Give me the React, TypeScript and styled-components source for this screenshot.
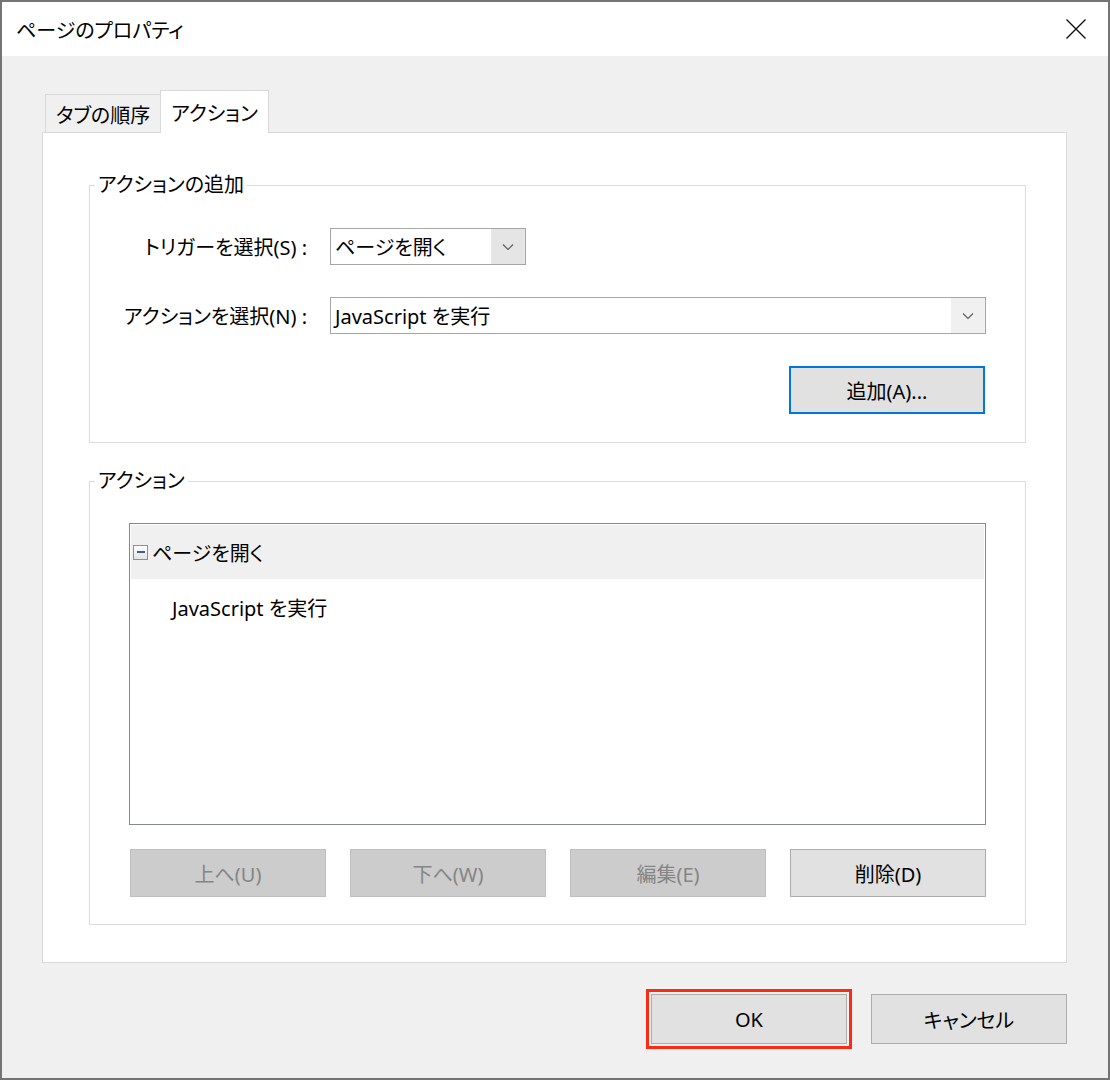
import React from "react";
import styled, { createGlobalStyle } from "styled-components";

const GlobalStyle = createGlobalStyle`
  body {
    margin: 0;
    background: #ffffff;
  }
`;

const Window = styled.div`
  width: 1110px;
  height: 1080px;
  box-sizing: border-box;
  border: 2px solid #747474;
  background: #f0f0f0;
  display: flex;
  flex-direction: column;
  font-family: "Noto Sans", "Noto Sans CJK JP", sans-serif;
  font-size: 20px;
  font-feature-settings: "palt";
  color: #000;
`;

const TitleBar = styled.div`
  height: 54px;
  flex: none;
  background: #fff;
  display: flex;
  align-items: center;
  justify-content: space-between;
  padding: 0 22px 0 14px;
`;

const Title = styled.span`
  font-size: 20px;
`;

const CloseButton = styled.div`
  width: 20px;
  height: 20px;
  display: flex;
`;

const Body = styled.div`
  flex: 1;
  display: flex;
  flex-direction: column;
  padding: 34px 41px 0 40px;
`;

const TabStrip = styled.div`
  display: flex;
  align-items: flex-end;
  height: 42px;
  padding-left: 3px;
  position: relative;
  z-index: 1;
`;

const Tab = styled.div<{ $active?: boolean }>`
  box-sizing: border-box;
  width: ${(p) => (p.$active ? 109 : 115)}px;
  height: ${(p) => (p.$active ? 43 : 38)}px;
  margin-bottom: ${(p) => (p.$active ? -1 : 0)}px;
  display: flex;
  align-items: center;
  justify-content: center;
  border: 1px solid #d9d9d9;
  border-bottom: none;
  ${(p) => (p.$active ? "" : "border-right: none;")}
  background: ${(p) => (p.$active ? "#fff" : "#f0f0f0")};
  padding-top: ${(p) => (p.$active ? 0 : 1)}px;
`;

const Panel = styled.div`
  height: 831px;
  box-sizing: border-box;
  border: 1px solid #d9d9d9;
  background: #fff;
  padding: 38px 40px 0 46px;
  display: flex;
  flex-direction: column;
  gap: 24px;
`;

const GroupBox = styled.fieldset`
  margin: 0;
  padding: 0;
  border: 1px solid #dcdcdc;
  min-width: 0;
`;

const GroupLegend = styled.legend`
  margin-left: 5px;
  padding: 0 3px;
  line-height: 28px;
`;

const FormGrid = styled.div`
  display: grid;
  grid-template-columns: 217px 1fr;
  column-gap: 23px;
  row-gap: 32px;
  align-items: center;
  padding: 29px 39px 28px 0;
`;

const FieldLabel = styled.label`
  text-align: right;
  white-space: nowrap;
`;

const Combo = styled.div<{ $width?: number }>`
  box-sizing: border-box;
  height: 37px;
  width: ${(p) => (p.$width ? `${p.$width}px` : "100%")};
  border: 1px solid #a6a6a6;
  display: flex;
  background: #fff;
`;

const ComboText = styled.div`
  flex: 1;
  display: flex;
  align-items: center;
  padding-left: 4px;
  white-space: nowrap;
`;

const ComboArrow = styled.div<{ $shade: string }>`
  width: 34px;
  background: ${(p) => p.$shade};
  display: flex;
  align-items: center;
  justify-content: center;
`;

const ButtonCell = styled.div`
  grid-column: 2;
  display: flex;
  justify-content: flex-end;
  padding-right: 1px;
`;

const Button = styled.button<{ $disabled?: boolean; $primary?: boolean; $width?: number }>`
  box-sizing: border-box;
  width: ${(p) => (p.$width ? `${p.$width}px` : "100%")};
  height: 48px;
  font: inherit;
  font-feature-settings: "palt";
  color: ${(p) => (p.$disabled ? "#858585" : "#000")};
  background: ${(p) => (p.$disabled ? "#cccccc" : "#e1e1e1")};
  border: ${(p) =>
    p.$primary ? "2px solid #0078d7" : p.$disabled ? "1px solid #bfbfbf" : "1px solid #adadad"};
  padding: 0;
  margin: 0;
  cursor: default;
`;

const ActionsBody = styled.div`
  padding: 28px 39px 27px 39px;
  display: flex;
  flex-direction: column;
  gap: 24px;
`;

const TreeList = styled.div`
  box-sizing: border-box;
  height: 302px;
  border: 1px solid #828790;
  padding: 1px;
  background: #fff;
`;

const TreeRow = styled.div<{ $parent?: boolean }>`
  height: ${(p) => (p.$parent ? 54 : 56)}px;
  display: flex;
  align-items: center;
  background: ${(p) => (p.$parent ? "#f0f0f0" : "transparent")};
  padding-left: ${(p) => (p.$parent ? 2 : 41)}px;
`;

const Expander = styled.span`
  box-sizing: border-box;
  width: 15px;
  height: 15px;
  margin-right: 4px;
  border: 1px solid #8f8f8f;
  background: linear-gradient(#ffffff, #e4e4e4);
  display: flex;
  align-items: center;
  justify-content: center;
  &::after {
    content: "";
    width: 8px;
    height: 2px;
    background: #3d5ca3;
  }
`;

const ButtonRow = styled.div`
  display: grid;
  grid-template-columns: repeat(4, 1fr);
  column-gap: 24px;
  padding-left: 1px;
`;

const Footer = styled.div`
  display: flex;
  justify-content: flex-end;
  gap: 24px;
  padding-top: 31px;
`;

const DialogButton = styled(Button)<{ $focused?: boolean }>`
  width: 196px;
  height: 50px;
  ${(p) => (p.$focused ? "outline: 3px solid #fa2a14; outline-offset: 2px;" : "")}
`;

const Chevron = () => (
  <svg width="12" height="8" viewBox="0 0 12 8">
    <polyline points="1,1.5 6,6.5 11,1.5" fill="none" stroke="#5a5a5a" strokeWidth="1.1" />
  </svg>
);

export default function App() {
  return (
    <>
      <GlobalStyle />
      <Window>
        <TitleBar>
          <Title>ページのプロパティ</Title>
          <CloseButton>
            <svg width="20" height="20" viewBox="0 0 20 20">
              <path d="M0.5 0.5 L19.5 19.5 M19.5 0.5 L0.5 19.5" stroke="#111" strokeWidth="1.4" />
            </svg>
          </CloseButton>
        </TitleBar>
        <Body>
          <TabStrip>
            <Tab>タブの順序</Tab>
            <Tab $active>アクション</Tab>
          </TabStrip>
          <Panel>
            <GroupBox>
              <GroupLegend>アクションの追加</GroupLegend>
              <FormGrid>
                <FieldLabel>トリガーを選択(S) :</FieldLabel>
                <Combo $width={196}>
                  <ComboText>ページを開く</ComboText>
                  <ComboArrow $shade="#e5e5e5">
                    <Chevron />
                  </ComboArrow>
                </Combo>
                <FieldLabel>アクションを選択(N) :</FieldLabel>
                <Combo>
                  <ComboText>JavaScript を実行</ComboText>
                  <ComboArrow $shade="#f0f0f0">
                    <Chevron />
                  </ComboArrow>
                </Combo>
                <ButtonCell>
                  <Button $primary $width={196}>
                    追加(A)...
                  </Button>
                </ButtonCell>
              </FormGrid>
            </GroupBox>
            <GroupBox>
              <GroupLegend>アクション</GroupLegend>
              <ActionsBody>
                <TreeList>
                  <TreeRow $parent>
                    <Expander />
                    ページを開く
                  </TreeRow>
                  <TreeRow>JavaScript を実行</TreeRow>
                </TreeList>
                <ButtonRow>
                  <Button $disabled>上へ(U)</Button>
                  <Button $disabled>下へ(W)</Button>
                  <Button $disabled>編集(E)</Button>
                  <Button>削除(D)</Button>
                </ButtonRow>
              </ActionsBody>
            </GroupBox>
          </Panel>
          <Footer>
            <DialogButton $focused>OK</DialogButton>
            <DialogButton>キャンセル</DialogButton>
          </Footer>
        </Body>
      </Window>
    </>
  );
}
